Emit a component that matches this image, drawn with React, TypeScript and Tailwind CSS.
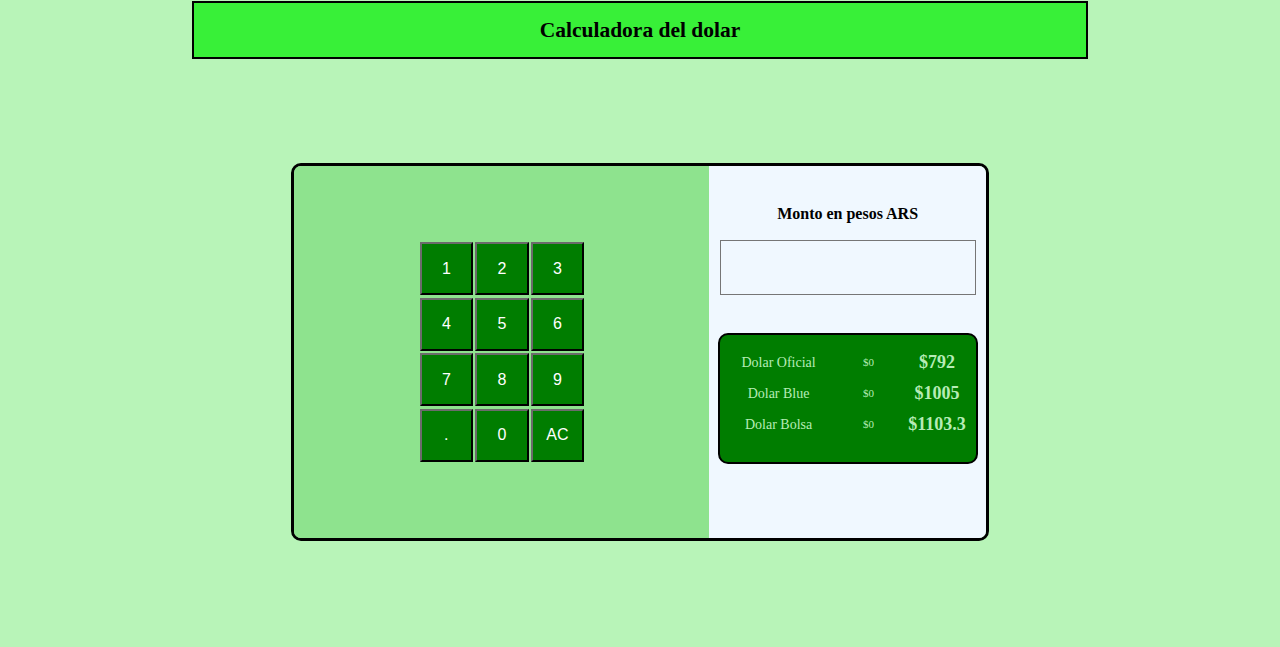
const keys = ["1", "2", "3", "4", "5", "6", "7", "8", "9", ".", "0", "AC"];

const rates = [
  { name: "Dolar Oficial", value: "$792" },
  { name: "Dolar Blue", value: "$1005" },
  { name: "Dolar Bolsa", value: "$1103.3" },
];

const App = () => {
  return (
    <div className="min-h-[647px] w-full bg-[#b8f4b8] font-['Liberation_Serif',serif]">
      {/* Header */}
      <div className="mx-auto w-[896px] pt-[1px]">
        <div className="flex h-[58px] items-center justify-center border-2 border-black bg-[#38f038]">
          <h1 className="text-[21.5px] font-bold text-black">Calculadora del dolar</h1>
        </div>
      </div>

      {/* Card */}
      <div className="mx-auto mt-[104px] flex h-[378px] w-[698px] overflow-hidden rounded-[10px] border-[3px] border-black">
        {/* Keypad side */}
        <div className="flex w-[60%] items-center justify-center bg-[#8ee38e]">
          <div className="grid grid-cols-[repeat(3,53px)] gap-[2.5px]">
            {keys.map((k) => (
              <button
                key={k}
                className="flex h-[53px] w-[53.5px] items-center justify-center border-2 border-t-[#6b6b6b] border-l-[#6b6b6b] border-b-black border-r-black bg-[#007d00] font-['Liberation_Sans',sans-serif] text-[16px] text-white"
              >
                {k}
              </button>
            ))}
          </div>
        </div>

        {/* Result side */}
        <div className="flex w-[40%] flex-col items-center bg-[#f0f8ff]">
          <h2 className="mt-[36px] text-[16px] font-bold text-black">Monto en pesos ARS</h2>
          <input
            type="text"
            className="mt-[14px] h-[55px] w-[256px] border border-[#767676] bg-[#f0f8ff] outline-none"
          />
          <div className="mt-[38px] flex h-[131px] w-[260px] flex-col gap-[9px] rounded-[10px] border-2 border-black bg-[#007d00] pt-[14px] text-[#b6ecb6]">
            {rates.map((r) => (
              <div key={r.name} className="grid h-[22px] grid-cols-[118px_62px_1fr] items-center">
                <span className="text-center text-[14px]">{r.name}</span>
                <span className="text-center text-[11px]">$0</span>
                <span className="pr-[1px] text-center text-[18px] font-bold">{r.value}</span>
              </div>
            ))}
          </div>
        </div>
      </div>
    </div>
  );
};

export default App;
